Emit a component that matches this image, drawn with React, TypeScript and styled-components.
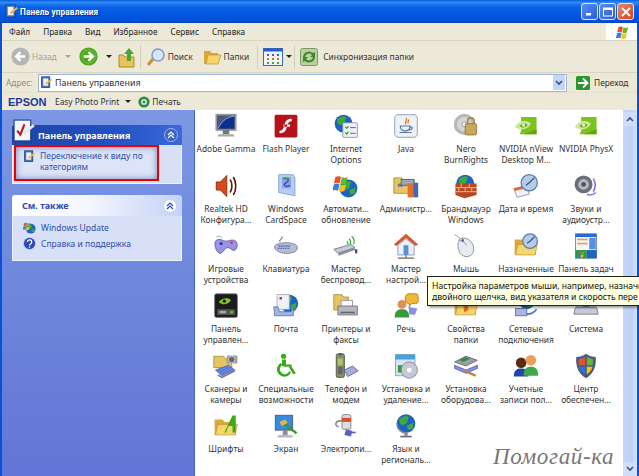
import React from "react";
import styled, { createGlobalStyle } from "styled-components";

const Global = createGlobalStyle`
  html, body { margin: 0; padding: 0; width: 639px; height: 476px; overflow: hidden; background: #fff; }
  * { box-sizing: border-box; }
`;
const Win = styled.div`
  position: relative; width: 639px; height: 476px; overflow: hidden; display: flex; flex-direction: column;
  font-family: "Noto Sans", "DejaVu Sans", sans-serif; font-size: 8.4px; color: #222; background: #ece9d8;
`;
const TitleBar = styled.div`
  height: 23px; flex: none; display: flex; align-items: center; padding: 0 5px 0 4px; gap: 1px;
  background: linear-gradient(180deg, #0a5be0 0%, #2f8cf6 10%, #0a62e6 30%, #0255e0 70%, #0450d8 90%, #0240b8 100%);
`;
const TitleText = styled.span`
  flex: 1; color: #fff; font-family: Roboto, sans-serif; font-weight: 700; font-size: 8.2px; letter-spacing: .15px; text-shadow: 1px 1px 1px #0a2a90;
`;
const WinBtn = styled.div<{ $bg: string }>`
  width: 17px; height: 17px; border: 1px solid #dfe8ff; border-radius: 3px; background: ${(p) => p.$bg};
  display: flex; align-items: center; justify-content: center;
`;
const Body = styled.div`
  flex: 1; display: flex; flex-direction: column; min-height: 0;
  border-left: 2px solid #0a50d8; border-right: 2px solid #0a50d8;
`;
const MenuBar = styled.div`
  height: 18px; flex: none; display: flex; align-items: center; background: #ece9d8; border-bottom: 1px solid #d8d4c0;
`;
const MenuItems = styled.div`
  flex: 1; display: flex; gap: 13px; padding-left: 7px; color: #222; font-size: 8.2px;
`;
const Flag = styled.div`
  width: 31px; height: 17px; background: #fff; display: flex; align-items: center; justify-content: center;
`;
const ToolBar = styled.div`
  height: 32px; flex: none; display: flex; align-items: center; padding-left: 9px; background: #ece9d8; border-bottom: 1px solid #d8d4c0;
`;
const Tool = styled.div<{ $mute?: boolean; $gap?: number; $left?: number }>`
  display: flex; align-items: center; gap: ${(p) => p.$gap ?? 3}px; color: ${(p) => (p.$mute ? "#a5a397" : "#333")};
  margin-left: ${(p) => p.$left ?? 0}px; flex: none;
`;
const Sep = styled.div<{ $l: number; $r: number }>`
  width: 1px; height: 24px; background: #d3cfbb; margin: 0 ${(p) => p.$r}px 0 ${(p) => p.$l}px; flex: none;
`;
const Caret = styled.div<{ $c?: string; $l?: number }>`
  width: 0; height: 0; border: 3px solid transparent; border-top: 3px solid ${(p) => p.$c ?? "#222"}; border-bottom: 0;
  margin-left: ${(p) => p.$l ?? 0}px; flex: none;
`;
const AddrBar = styled.div`
  height: 20px; flex: none; display: flex; align-items: center; background: #ece9d8; padding-left: 4px; border-bottom: 1px solid #e4e1cf;
`;
const AddrLabel = styled.span` color: #8f8d80; width: 32px; flex: none; `;
const AddrInput = styled.div`
  width: 529px; height: 18px; flex: none; display: flex; align-items: center; gap: 2px; padding: 0 1px 0 1px; background: #fff;
  border: 1px solid #9db6d8; color: #333; font-size: 8.9px;
`;
const AddrText = styled.span` flex: 1; `;
const Drop = styled.div`
  width: 12px; height: 15px; background: #c5d5f5; border-radius: 1px; display: flex; align-items: center; justify-content: center;
`;
const Go = styled.div`
  display: flex; align-items: center; gap: 4px; margin-left: 9px; color: #333;
`;
const EpsonBar = styled.div`
  height: 17px; flex: none; display: flex; align-items: center; background: #ece9d8; padding-left: 6px; color: #333;
`;
const EpsonLogo = styled.span`
  font-family: "Liberation Sans", sans-serif; font-weight: 700; font-size: 11px; color: #1a3a9c; width: 47px; flex: none;
`;
const Content = styled.div`
  flex: 1; display: flex; min-height: 0; background: #fff;
`;
const Side = styled.div`
  width: 193px; flex: none; padding: 15px 12px 0 10px; display: flex; flex-direction: column; gap: 11px;
  background: linear-gradient(180deg, #7c98e4 0%, #6b83da 60%, #6375d6 100%);
  border-right: 1px solid #4a63c8;
`;
const Card = styled.div``;
const Head = styled.div<{ $dark?: boolean }>`
  height: ${(p) => (p.$dark ? 20 : 21)}px; display: flex; align-items: center; justify-content: space-between;
  padding: ${(p) => (p.$dark ? "0 4px 0 26px" : "0 5px 0 10px")}; border-radius: 3px 3px 0 0;
  font-weight: 700; font-size: 9px; position: relative;
  color: ${(p) => (p.$dark ? "#fff" : "#2a4ab8")};
  background: ${(p) => (p.$dark ? "linear-gradient(90deg,#1e44a8,#2352c4 60%,#3a6ad8)" : "linear-gradient(90deg,#fff,#f4f6fe 45%,#c4d2f6)")};
`;
const HeadIcon = styled.div`
  position: absolute; left: 0; top: -7px; width: 25px; height: 25px;
`;
const Toggle = styled.div<{ $dark?: boolean }>`
  width: 14px; height: 14px; border-radius: 50%; flex: none; display: flex; align-items: center; justify-content: center;
  background: ${(p) => (p.$dark ? "#3a62c4" : "#fff")}; border: 1px solid ${(p) => (p.$dark ? "#9fb4ea" : "#c4d0ee")};
`;
const CardBody = styled.div<{ $h: number; $pad: string; $gap?: number }>`
  height: ${(p) => p.$h}px; background: #d8e0f8; padding: ${(p) => p.$pad}; display: flex; flex-direction: column; gap: ${(p) => p.$gap ?? 0}px;
  border: 1px solid #eef2fd; border-top: 0;
`;
const Highlight = styled.div`
  width: 145px; height: 36px; border: 2px solid #e8000a; display: flex; gap: 4px; padding: 3px 0 0 7px; margin-left: 1px;
  box-shadow: inset 0 0 6px rgba(40,50,120,.55); background: #dde4f8;
`;
const Link = styled.span`
  color: #2d4fa8; line-height: 11px; font-size: 8.5px;
`;
const LinkRow = styled.div`
  display: flex; align-items: center; gap: 5px;
`;
const Files = styled.div`
  flex: 1; display: grid; grid-template-columns: repeat(7, 60px); grid-auto-rows: 60px; padding: 3px 0 0 1px; align-content: start;
  overflow: hidden; background: #fff;
`;
const Item = styled.div`
  display: flex; flex-direction: column; align-items: center; overflow: visible; width: 60px;
`;
const IconBox = styled.div`
  width: 26px; height: 26px; margin-bottom: 5px; display: flex; align-items: center; justify-content: center;
`;
const Label = styled.div`
  width: 60px; flex: none; text-align: center; line-height: 10.5px; font-size: 8.4px; color: #333; white-space: pre-line;
`;
const Scroll = styled.div`
  width: 14px; flex: none; display: flex; flex-direction: column; justify-content: space-between; padding-top: 2px;
  background: linear-gradient(90deg, #c6d6fb, #bdd0fa 60%, #d6e2fc);
`;
const ScrollBtn = styled.div`
  height: 14px; background: #d2ddfb; display: flex; align-items: center; justify-content: center; border-radius: 2px;
`;
const Tip = styled.div`
  position: absolute; left: 427px; top: 276px; width: 212px; height: 30px; background: #ffffe1; border: 1px solid #222; border-right: 0;
  box-shadow: 2px 2px 2px rgba(0,0,0,.35); padding: 4px 0 0 4px; line-height: 11px; color: #111; font-size: 8.6px;
`;
const TipLine = styled.div`
  white-space: nowrap;
`;
const Mark = styled.div`
  position: absolute; left: 493px; top: 444px; font-family: "Liberation Serif", serif; font-style: italic; font-size: 23px; color: #777; letter-spacing: .65px;
`;

type SP = { s?: number; children: React.ReactNode };
const V = ({ s = 26, children }: SP) => (
  <svg width={s} height={s} viewBox="0 0 32 32">{children}</svg>
);
const Folder = ({ c = "#f6d66c" }: { c?: string }) => (
  <>
    <path d="M2 8h10l2 3h14v16H2z" fill="#d9a93c" />
    <path d="M3 27l3-13h24l-3 13z" fill={c} stroke="#c09030" strokeWidth=".8" />
  </>
);
const NvEye = () => (
  <>
    <path d="M10 5h19v21H8l2-4z" fill="#7cc31e" />
    <path d="M2 17c5-8 15-9 20-4-3 7-13 10-20 4z" fill="#cfe9a0" />
    <path d="M8 16c3-4 8-4 10-1-3 3-7 4-10 1z" fill="#5fa80c" />
    <circle cx="13" cy="15" r="2" fill="#e6f5c9" />
    <path d="M13 26l16-6v6z" fill="#5fa80c" />
  </>
);
const Globe = ({ x = 16, y = 16, r = 12 }: { x?: number; y?: number; r?: number }) => (
  <>
    <circle cx={x} cy={y} r={r} fill="#1c62c4" />
    <path d={`M${x - r * 0.7} ${y - r * 0.5}q${r * 0.6} -${r * 0.5} ${r} -${r * 0.2}l-${r * 0.2} ${r * 0.6}q-${r * 0.5} ${r * 0.5} -${r * 0.8} 0z`} fill="#3eaa3a" />
    <path d={`M${x + r * 0.1} ${y + r * 0.2}l${r * 0.7} -${r * 0.3}l-${r * 0.1} ${r * 0.7}l-${r * 0.5} ${r * 0.1}z`} fill="#3eaa3a" />
  </>
);
const WinFlag = ({ x = 0, y = 0, k = 1 }: { x?: number; y?: number; k?: number }) => (
  <g transform={`translate(${x} ${y}) scale(${k})`}>
    <path d="M2 5q4-2 7 0l-2 8q-3-2-7 0z" fill="#e8502a" />
    <path d="M10 5q3 2 7 0l-2 8q-4 2-7 0z" fill="#6cb52c" />
    <path d="M0 14q4-2 7 0l-2 8q-3-2-7 0z" fill="#3a7ce0" />
    <path d="M8 14q3 2 7 0l-2 8q-4 2-7 0z" fill="#f5c21c" />
  </g>
);
const Clock = ({ x, y, r }: { x: number; y: number; r: number }) => (
  <>
    <circle cx={x} cy={y} r={r} fill="#b6cbe6" stroke="#5a7aa6" strokeWidth="1.5" />
    <path d={`M${x} ${y}l${r * 0.6} -${r * 0.6}M${x} ${y}l-${r * 0.4} ${r * 0.3}`} stroke="#2a4a86" strokeWidth="1.5" />
  </>
);

const I: Record<string, React.ReactNode> = {
  gamma: <V><rect x="4" y="2" width="24" height="19" fill="#4a5a78" stroke="#9a9aa0" strokeWidth="2" /><path d="M6 19C12 8 18 5 26 4v15z" fill="#0c2f8f" /><path d="M6 19C12 8 18 5 26 4" stroke="#a0c4ff" fill="none" /><path d="M7 26h18l2 3H5z" fill="#a8a8a8" /><rect x="12" y="21" width="8" height="5" fill="#777" /></V>,
  flash: <V><rect x="2" y="2" width="28" height="28" rx="2" fill="#b5121b" /><path d="M23 7c-6 0-8 3-9 8s-3 7-6 7v3c6 0 8-3 9-8s3-7 6-7zM13 14h8v3h-8z" fill="#fff" /></V>,
  inet: <V><Globe x={13} y={13} r={11} /><rect x="12" y="12" width="18" height="18" rx="1" fill="#eef2f8" stroke="#7a8aa6" /><path d="M15 17l2 2 2-3M15 24l2 2 2-3" stroke="#2a9a2a" fill="none" strokeWidth="1.4" /><path d="M21 18h7M21 25h7" stroke="#445" /></V>,
  java: <V><rect x="2" y="2" width="28" height="28" rx="5" fill="#eef1f6" stroke="#a6b6d0" strokeWidth="1.5" /><path d="M16 6c3 3-3 5 0 8M19 8c1 2-2 3 0 5" stroke="#e2761b" strokeWidth="1.6" fill="none" /><path d="M9 16h12c0 4-2 6-6 6s-6-2-6-6zM21 17c4 0 3 4-1 4M8 24h15" stroke="#5a7aa6" strokeWidth="1.5" fill="none" /></V>,
  nero: <V><circle cx="14" cy="14" r="13" fill="#b8b8b8" /><circle cx="14" cy="14" r="9" fill="#d6d6d6" /><circle cx="14" cy="14" r="3" fill="#fff" stroke="#888" /><path d="M18 13v-3a4 4 0 018 0v3" stroke="#a8884a" strokeWidth="2" fill="none" /><rect x="15" y="13" width="14" height="14" rx="2" fill="#c9a85a" stroke="#8a6c2e" /></V>,
  nv: <V><NvEye /></V>,
  realtek: <V><path d="M4 11h5l8-8v26l-8-8H4z" fill="#d84a1c" stroke="#7a2008" /><path d="M21 8c3 4 3 12 0 16M25 5c4 6 4 16 0 22" stroke="#5a1a08" strokeWidth="2" fill="none" /></V>,
  card: <V><path d="M7 2h18l2 4v22l-20-4z" fill="#b6cdf2" stroke="#7e9dd4" /><rect x="11" y="5" width="11" height="14" fill="#7ea8e8" /><path d="M13 7c6-1 8 2 3 5s0 6 5 3" stroke="#5a2fb0" strokeWidth="1.6" fill="none" /><path d="M13 6l7 1" stroke="#3aaa3a" strokeWidth="2" /></V>,
  update: <V><Globe x={19} y={19} r={11} /><WinFlag x={1} y={0} k={1} /></V>,
  admin: <V><path d="M1 6h10l2 3h13v16H1z" fill="#e6c563" stroke="#a88a30" /><rect x="6" y="13" width="6" height="4" fill="#778" /><rect x="10" y="8" width="16" height="7" fill="#9aa6b8" stroke="#556" /><rect x="18" y="13" width="7" height="17" fill="#e2702a" /><rect x="25" y="12" width="6" height="18" fill="#3a6ac0" /></V>,
  fw: <V><Globe x={15} y={13} r={11} /><path d="M3 13l26 0v14L14 31 3 27z" fill="#b8471e" /><path d="M3 18h26M3 23h26M10 13v5M20 13v5M15 18v5M7 18v5M23 18v5" stroke="#f0b894" strokeWidth="1.2" /></V>,
  date: <V><path d="M1 19l16-4 3 11-15 4z" fill="#eef0f6" stroke="#8a90a8" /><path d="M1 19l16-4 1 3-16 4z" fill="#e2672a" /><Clock x={20} y={12} r={10} /></V>,
  sound: <V><circle cx="13" cy="14" r="11" fill="#6b6f7c" /><circle cx="13" cy="14" r="6.5" fill="#b6bac6" /><circle cx="13" cy="14" r="3" fill="#555" /><path d="M25 7c3 5 3 11 0 16M17 26c4 2 8 1 11-2" stroke="#7a7adf" strokeWidth="2" fill="none" /></V>,
  game: <V><path d="M4 9c5-3 8 1 12 1s8-3 12 0c3 3 2 9-1 11s-5-3-9-3-6 8-10 7S0 12 4 9z" fill="#9a92e4" stroke="#5a52a8" /><circle cx="23" cy="12" r="1.5" fill="#e23" /><circle cx="10" cy="13" r="2" fill="#3a3a8a" /><path d="M4 5q4-3 7 1" stroke="#7a8" fill="none" /></V>,
  kbd: <V><path d="M2 17c0-3 6-5 14-5s14 2 14 6c0 5-6 7-14 7S2 21 2 17z" fill="#b8bcd0" stroke="#70748a" /><path d="M7 16h14M6 19h14" stroke="#5068b0" strokeWidth="1.6" strokeDasharray="2 1" /><path d="M9 11c-3-3 4-3 2-7" stroke="#70748a" strokeWidth="1.4" fill="none" /></V>,
  wifi: <V><path d="M1 20l21-6 5 4-21 7z" fill="#c6cad6" stroke="#6a6e80" /><path d="M6 25l21-7v3L7 28z" fill="#8a8e9e" /><rect x="27" y="20" width="3" height="5" fill="#555" /><path d="M17 10q2 2 1 4M20 7q3 4 1 7M23 4q5 5 2 10" stroke="#3aaa3a" strokeWidth="1.5" fill="none" /></V>,
  home: <V><path d="M16 1L1 14l3 2 12-10 12 10 3-2z" fill="#d9552a" /><path d="M6 15l10-8 10 8v12H6z" fill="#eaf0f8" stroke="#7a8ab0" /><rect x="13" y="15" width="6" height="12" fill="#5a8ed8" /><path d="M16 27v4M6 31h20" stroke="#666" strokeWidth="1.4" /></V>,
  mouse: <V><path d="M9 7c6-3 14 2 16 9s-2 13-8 13S7 25 6 16c0-4 1-7 3-9z" fill="#e8ebf2" stroke="#7c8092" /><path d="M8 9c4 1 7 3 9 6" stroke="#7c8092" fill="none" /><ellipse cx="12" cy="9" rx="1.5" ry="2" fill="#5a62a0" /><path d="M9 7C6 5 5 3 2 2" stroke="#778" fill="none" /></V>,
  task: <V><Folder /><Clock x={21} y={10} r={9} /></V>,
  bar: <V><rect x="3" y="1" width="26" height="30" fill="#f4f7fd" stroke="#5a7ab0" /><rect x="3" y="1" width="26" height="4" fill="#2a6ad8" /><rect x="5" y="7" width="13" height="2" fill="#e8a23a" /><rect x="5" y="12" width="13" height="2" fill="#e8a23a" /><rect x="20" y="6" width="8" height="14" fill="#5a8ee0" /><rect x="3" y="21" width="14" height="10" fill="#2c9a3a" /><rect x="17" y="21" width="12" height="10" fill="#1e62c4" /><WinFlag x={7} y={21} k={0.4} /></V>,
  nvpanel: <V><rect x="2" y="1" width="28" height="29" rx="2" fill="#1c1c1c" stroke="#777" /><path d="M7 11c4-5 12-6 15-2-3 5-10 7-15 2z" fill="#84c41e" /><circle cx="14" cy="10" r="2" fill="#1c1c1c" /><rect x="5" y="20" width="22" height="7" fill="#555" /><circle cx="23" cy="23.5" r="2" fill="#4cc43a" /><rect x="8" y="22" width="8" height="3" fill="#aaa" /></V>,
  mail: <V><Globe x={20} y={13} r={11} /><rect x="5" y="2" width="15" height="18" fill="#eef2fa" stroke="#9aa6c0" /><rect x="8" y="5" width="3" height="3" fill="#d22" /><path d="M1 17l5 0 2 6h14l3-6v11H2z" fill="#9fb6e4" stroke="#5a72a8" /></V>,
  print: <V><path d="M1 2h10l2 3h6v16H1z" fill="#e6c563" stroke="#a88a30" /><rect x="10" y="9" width="14" height="9" fill="#fff" stroke="#889" /><path d="M6 16h24v11H6z" fill="#b6b8be" stroke="#6a6c78" /><rect x="9" y="23" width="18" height="2" fill="#666" /></V>,
  speech: <V><path d="M18 1h10a3 3 0 013 3v6a3 3 0 01-3 3h-5l-3 4v-4a5 5 0 01-5-5 7 7 0 013-7z" fill="#f0b93a" stroke="#b07a10" /><circle cx="11" cy="14" r="5.5" fill="#d9925a" /><path d="M2 30c0-8 4-10 9-10s9 2 9 10z" fill="#3a9a3a" /><path d="M19 17l11 2-3 8-7-1z" fill="#8a92e0" /></V>,
  folderp: <V><Folder /><path d="M12 12l6-3 1 12-5 3z" fill="#e2672a" /></V>,
  net: <V><Globe x={17} y={10} r={10} /><rect x="3" y="19" width="14" height="9" fill="#a8b6e0" stroke="#5a6a9a" /><path d="M17 26c5 0 9-2 12-6" stroke="#4a6ad8" strokeWidth="2" fill="none" /></V>,
  sys: <V><rect x="4" y="1" width="24" height="15" fill="#9ab4ea" stroke="#5a6a9a" /><path d="M3 18h26l2 8H1z" fill="#c6cad6" stroke="#6a6e80" /><path d="M12 17l4-6 4 6z" fill="#3a62c4" /></V>,
  scan: <V><path d="M1 4h12l2 3h8v11H1z" fill="#e6c563" stroke="#a88a30" /><rect x="17" y="3" width="13" height="10" rx="1" fill="#9a9ca8" /><circle cx="23" cy="8" r="4" fill="#666" stroke="#ddd" /><path d="M3 21l16-6 8 6-16 7z" fill="#5a82e0" stroke="#5a6a9a" /><path d="M6 27l5 3 16-8" stroke="#778" strokeWidth="2" fill="none" /></V>,
  access: <V><circle cx="13" cy="4" r="3.2" fill="#3aaa18" /><path d="M11 8h5v6h7v3h-8l-4-1z" fill="#3aaa18" /><path d="M10 12a9 9 0 1012 12l-2-2a6 6 0 11-9-7z" fill="#3aaa18" /><path d="M19 17h4l5 8-3 1z" fill="#3aaa18" /></V>,
  phone: <V><rect x="4" y="1" width="10" height="29" rx="2" fill="#8a8e6e" stroke="#4a4c3a" /><rect x="6" y="7" width="6" height="8" fill="#a8c86a" /><rect x="6" y="17" width="6" height="9" fill="#666" /><path d="M14 21l10-5 7 6-13 7z" fill="#a8acd8" stroke="#5a5e90" /><rect x="8" y="0" width="2" height="3" fill="#444" /></V>,
  install: <V><rect x="3" y="2" width="24" height="26" fill="#d6e6f6" stroke="#7a9ac0" /><rect x="3" y="2" width="24" height="6" fill="#4aa0e0" /><rect x="6" y="15" width="6" height="9" fill="#3a9a3a" /><circle cx="20" cy="21" r="10" fill="#c6c8d6" stroke="#7a7e98" /><circle cx="20" cy="21" r="3" fill="#fff" /></V>,
  hw: <V><path d="M2 11l14-7 14 5-14 7z" fill="#9aa0aa" stroke="#5a5e6a" /><path d="M7 9l8-4 6 2-8 4z" fill="#3a8a4a" /><path d="M2 15l14 6 14-6v4l-14 6-14-6z" fill="#8a8eea" stroke="#5a5ea8" /><path d="M14 22l14 6" stroke="#b8863a" strokeWidth="3" /></V>,
  users: <V><circle cx="10" cy="12" r="6.5" fill="#5a2a14" /><path d="M1 29c0-8 4-10 9-10s9 2 9 10z" fill="#2444a8" /><circle cx="22" cy="9" r="6.5" fill="#e8a05a" /><path d="M13 28c0-9 4-11 9-11s9 2 9 11z" fill="#3aaa4a" /></V>,
  shield: <V><path d="M16 1c4 3 8 4 12 4 1 12-3 21-12 26C7 26 3 17 4 5c4 0 8-1 12-4z" fill="#4a5a80" /><path d="M7 8l8-3v10H7z" fill="#e2542a" /><path d="M17 5l8 3-1 7h-7z" fill="#6cb52c" /><path d="M7 17h8v9c-4-2-7-5-8-9z" fill="#2a74e0" /><path d="M17 17h7c-1 4-3 7-7 9z" fill="#f5c21c" /></V>,
  fonts: <V><Folder /><path d="M14 24L24 3h4v21h-4v-8h-5l-3 8z" fill="#3aaa18" /></V>,
  screen: <V><rect x="3" y="3" width="21" height="18" fill="#3a8ae0" stroke="#5a6a8a" strokeWidth="1.5" /><path d="M7 27h16l2 3H5z" fill="#b6bac6" /><rect x="12" y="21" width="6" height="6" fill="#8a8e9a" /><path d="M13 13l16 12" stroke="#3a9a2a" strokeWidth="3" /><path d="M8 11l7-3 3 4-7 4z" fill="#e8b83a" /></V>,
  power: <V><rect x="11" y="2" width="11" height="18" rx="2" fill="#dcdce0" stroke="#777" /><rect x="11" y="6" width="11" height="5" fill="#d8502a" /><path d="M11 10C3 8 1 16 7 17" stroke="#889" strokeWidth="2" fill="none" /><path d="M16 20l8 2-2 7-8-2z" fill="#5a62c0" /><path d="M21 24h7" stroke="#5a62c0" strokeWidth="2" /></V>,
  lang: <V><Globe x={16} y={13} r={11.5} /><path d="M5 13c0 8 6 12 13 12" stroke="#889" strokeWidth="2" fill="none" /><rect x="14" y="25" width="4" height="3" fill="#889" /><path d="M9 30h14v-2H9z" fill="#667" /></V>,
};

const items: [string, string][] = [
  ["gamma", "Adobe Gamma"], ["flash", "Flash Player"], ["inet", "Internet\nOptions"], ["java", "Java"], ["nero", "Nero\nBurnRights"], ["nv", "NVIDIA nView\nDesktop M..."], ["nv", "NVIDIA PhysX"],
  ["realtek", "Realtek HD\nКонфигура..."], ["card", "Windows\nCardSpace"], ["update", "Автомати...\nобновление"], ["admin", "Администр..."], ["fw", "Брандмауэр\nWindows"], ["date", "Дата и время"], ["sound", "Звуки и\nаудиоустр..."],
  ["game", "Игровые\nустройства"], ["kbd", "Клавиатура"], ["wifi", "Мастер\nбеспровод..."], ["home", "Мастер\nнастрой..."], ["mouse", "Мышь"], ["task", "Назначенные"], ["bar", "Панель задач"],
  ["nvpanel", "Панель\nуправлен..."], ["mail", "Почта"], ["print", "Принтеры и\nфаксы"], ["speech", "Речь"], ["folderp", "Свойства\nпапки"], ["net", "Сетевые\nподключения"], ["sys", "Система"],
  ["scan", "Сканеры и\nкамеры"], ["access", "Специальные\nвозможности"], ["phone", "Телефон и\nмодем"], ["install", "Установка и\nудаление..."], ["hw", "Установка\nоборудова..."], ["users", "Учетные\nзаписи пол..."], ["shield", "Центр\nобеспечен..."],
  ["fonts", "Шрифты"], ["screen", "Экран"], ["power", "Электропи..."], ["lang", "Язык и\nрегиональ..."],
];

const Chevrons = ({ c }: { c: string }) => (
  <svg width="8" height="8" viewBox="0 0 8 8"><path d="M1 4l3-3 3 3M1 7l3-3 3 3" stroke={c} strokeWidth="1.2" fill="none" /></svg>
);
const CPIcon = ({ s = 13 }: { s?: number }) => (
  <svg width={s} height={s} viewBox="0 0 16 16"><rect x="2" y="1" width="10" height="13" fill="#4a78c8" stroke="#1e3a80" /><rect x="4" y="3" width="6" height="9" fill="#eef2fa" /><path d="M7 10l7-6" stroke="#e8b83a" strokeWidth="2.4" /></svg>
);
const Arrow = ({ bg, s }: { bg: string; s: number }) => (
  <svg width={s} height={s} viewBox="0 0 20 20"><circle cx="10" cy="10" r="9.6" fill={bg} /><circle cx="10" cy="10" r="7" fill="none" stroke="#fff" strokeOpacity=".25" /><path d="M5 10h9M10 5.5l4.5 4.5-4.5 4.5" stroke="#fff" strokeWidth="2.6" fill="none" /></svg>
);
const BackArrow = ({ s }: { s: number }) => (
  <svg width={s} height={s} viewBox="0 0 20 20"><circle cx="10" cy="10" r="9.6" fill="#b5b5b5" /><path d="M15 10H6M10 5.5L5.5 10l4.5 4.5" stroke="#fff" strokeWidth="2.6" fill="none" /></svg>
);

export default function App() {
  return (
    <Win>
      <Global />
      <TitleBar>
        <CPIcon s={15} />
        <TitleText>Панель управления</TitleText>
        <WinBtn $bg="linear-gradient(135deg,#5a8cf0,#2a5cd8)"><svg width="9" height="9"><rect x="1" y="6" width="5" height="2.5" fill="#fff" /></svg></WinBtn>
        <WinBtn $bg="linear-gradient(135deg,#5a8cf0,#2a5cd8)"><svg width="10" height="10"><rect x=".5" y="1" width="9" height="8" fill="none" stroke="#fff" /><rect x=".5" y="1" width="9" height="2" fill="#fff" /></svg></WinBtn>
        <WinBtn $bg="linear-gradient(135deg,#e88a6a,#d8401c)"><svg width="10" height="10"><path d="M1 1l8 8M9 1l-8 8" stroke="#fff" strokeWidth="1.8" /></svg></WinBtn>
      </TitleBar>
      <Body>
        <MenuBar>
          <MenuItems>
            {["Файл", "Правка", "Вид", "Избранное", "Сервис", "Справка"].map((m) => <span key={m}>{m}</span>)}
          </MenuItems>
          <Flag><svg width="16" height="15" viewBox="0 0 17 23"><WinFlag x={1} y={0} k={1} /></svg></Flag>
        </MenuBar>
        <ToolBar>
          <Tool $mute $gap={2}><BackArrow s={19} />Назад<Caret $c="#a5a397" $l={6} /></Tool>
          <Tool $gap={8} $left={8}><Arrow bg="#4ea81e" s={19} /><Caret /></Tool>
          <Tool $left={6}><svg width="18" height="22" viewBox="0 0 18 22"><path d="M1 9h4l2 2h9v10H1z" fill="#e8c35a" stroke="#a88a30" /><path d="M9 15V8H6l5-6 5 6h-3v7z" fill="#4aa82a" /></svg></Tool>
          <Sep $l={4} $r={5} />
          <Tool $gap={2}><svg width="20" height="20" viewBox="0 0 20 20"><circle cx="12" cy="8" r="6" fill="#d6e6fa" stroke="#8a9ac0" strokeWidth="1.6" /><path d="M7 12l-5 6" stroke="#c9902a" strokeWidth="3" /></svg>Поиск</Tool>
          <Tool $gap={2} $left={10}><svg width="19" height="18" viewBox="0 0 19 18"><path d="M1 3h6l2 2h6v11H1z" fill="#d9a93c" /><path d="M3 16l2-9h13l-3 9z" fill="#f6d66c" stroke="#c09030" strokeWidth=".7" /></svg>Папки</Tool>
          <Sep $l={8} $r={5} />
          <Tool $gap={3}><svg width="20" height="18" viewBox="0 0 20 18"><rect x=".5" y=".5" width="19" height="17" fill="#eef3fc" stroke="#3a6ac0" /><rect x=".5" y=".5" width="19" height="3" fill="#2a5cc8" /><path d="M4 6h2v2H4zM9 6h2v2H9zM14 6h2v2h-2z" fill="#2a6ad8" /><path d="M4 10h2v2H4zM9 10h2v2H9zM14 10h2v2h-2z" fill="#e2672a" /><path d="M4 14h2v2H4zM9 14h2v2H9zM14 14h2v2h-2z" fill="#3aaa3a" /></svg><Caret /></Tool>
          <Sep $l={2} $r={5} />
          <Tool $gap={5}><svg width="18" height="18" viewBox="0 0 18 18"><rect x=".5" y=".5" width="17" height="17" rx="2" fill="#bcd0a0" stroke="#7a9a6a" /><path d="M3 9a6 6 0 0110-4l2-1v5h-5l2-2a4 4 0 00-7 2zM15 9a6 6 0 01-10 4l-2 1V9h5l-2 2a4 4 0 007-2z" fill="#3e8a2a" /></svg>Синхронизация папки</Tool>
        </ToolBar>
        <AddrBar>
          <AddrLabel>Адрес:</AddrLabel>
          <AddrInput>
            <CPIcon />
            <AddrText>Панель управления</AddrText>
            <Drop><svg width="8" height="6"><path d="M1 1l3 3 3-3" stroke="#33518f" strokeWidth="1.6" fill="none" /></svg></Drop>
          </AddrInput>
          <Go>
            <svg width="14" height="14" viewBox="0 0 14 14"><rect width="14" height="14" rx="1.5" fill="#2c962c" /><path d="M2 7h9M7 2.5L11.5 7 7 11.5" stroke="#fff" strokeWidth="1.8" fill="none" /></svg>
            Переход
          </Go>
        </AddrBar>
        <EpsonBar>
          <EpsonLogo>EPSON</EpsonLogo>
          <span>Easy Photo Print</span>
          <Caret $l={6} />
          <svg style={{ margin: "0 2px 0 7px" }} width="12" height="12" viewBox="0 0 12 12"><circle cx="6" cy="6" r="5.6" fill="#2e8a4a" /><circle cx="6" cy="6" r="3" fill="#cfe6c8" /><circle cx="6" cy="6" r="1.3" fill="#2e8a4a" /></svg>
          <span>Печать</span>
        </EpsonBar>
        <Content>
          <Side>
            <Card>
              <Head $dark>
                <HeadIcon>
                  <svg width="25" height="25" viewBox="0 0 24 24"><rect x="2" y="2" width="16" height="20" fill="#f4f6fc" stroke="#1e3a80" /><path d="M5 12l3 4 4-10" stroke="#b81c1c" strokeWidth="2" fill="none" /><path d="M11 15l10-8" stroke="#e8e8f0" strokeWidth="2.6" /></svg>
                </HeadIcon>
                Панель управления
                <Toggle $dark><Chevrons c="#fff" /></Toggle>
              </Head>
              <CardBody $h={39} $pad="0">
                <Highlight>
                  <CPIcon />
                  <Link>Переключение к виду по<br />категориям</Link>
                </Highlight>
              </CardBody>
            </Card>
            <Card>
              <Head>
                См. также
                <Toggle><Chevrons c="#2a4ab8" /></Toggle>
              </Head>
              <CardBody $h={45} $pad="5px 0 0 10px" $gap={3}>
                <LinkRow>
                  <svg width="13" height="13" viewBox="0 0 32 32"><Globe x={19} y={19} r={12} /><WinFlag x={1} y={0} k={1} /></svg>
                  <Link>Windows Update</Link>
                </LinkRow>
                <LinkRow>
                  <svg width="13" height="13" viewBox="0 0 14 14"><circle cx="7" cy="7" r="6.5" fill="#2a4ab8" stroke="#c8d0e8" /><path d="M4.8 5.4a2.3 2.3 0 114 1.5c-.9.8-1.8 1.1-1.8 2.2M7 10.3v1.4" stroke="#fff" strokeWidth="1.4" fill="none" /></svg>
                  <Link>Справка и поддержка</Link>
                </LinkRow>
              </CardBody>
            </Card>
          </Side>
          <Files>
            {items.map(([k, t], i) => (
              <Item key={i}>
                <IconBox>{I[k]}</IconBox>
                <Label>{t}</Label>
              </Item>
            ))}
          </Files>
          <Scroll>
            <ScrollBtn><svg width="8" height="6"><path d="M1 5l3-3 3 3" stroke="#33518f" strokeWidth="1.6" fill="none" /></svg></ScrollBtn>
            <ScrollBtn><svg width="8" height="6"><path d="M1 1l3 3 3-3" stroke="#33518f" strokeWidth="1.6" fill="none" /></svg></ScrollBtn>
          </Scroll>
        </Content>
      </Body>
      <Tip>
        <TipLine>Настройка параметров мыши, например, назначен</TipLine>
        <TipLine>двойного щелчка, вид указателя и скорость пере</TipLine>
      </Tip>
      <Mark>Помогай-ка</Mark>
    </Win>
  );
}
